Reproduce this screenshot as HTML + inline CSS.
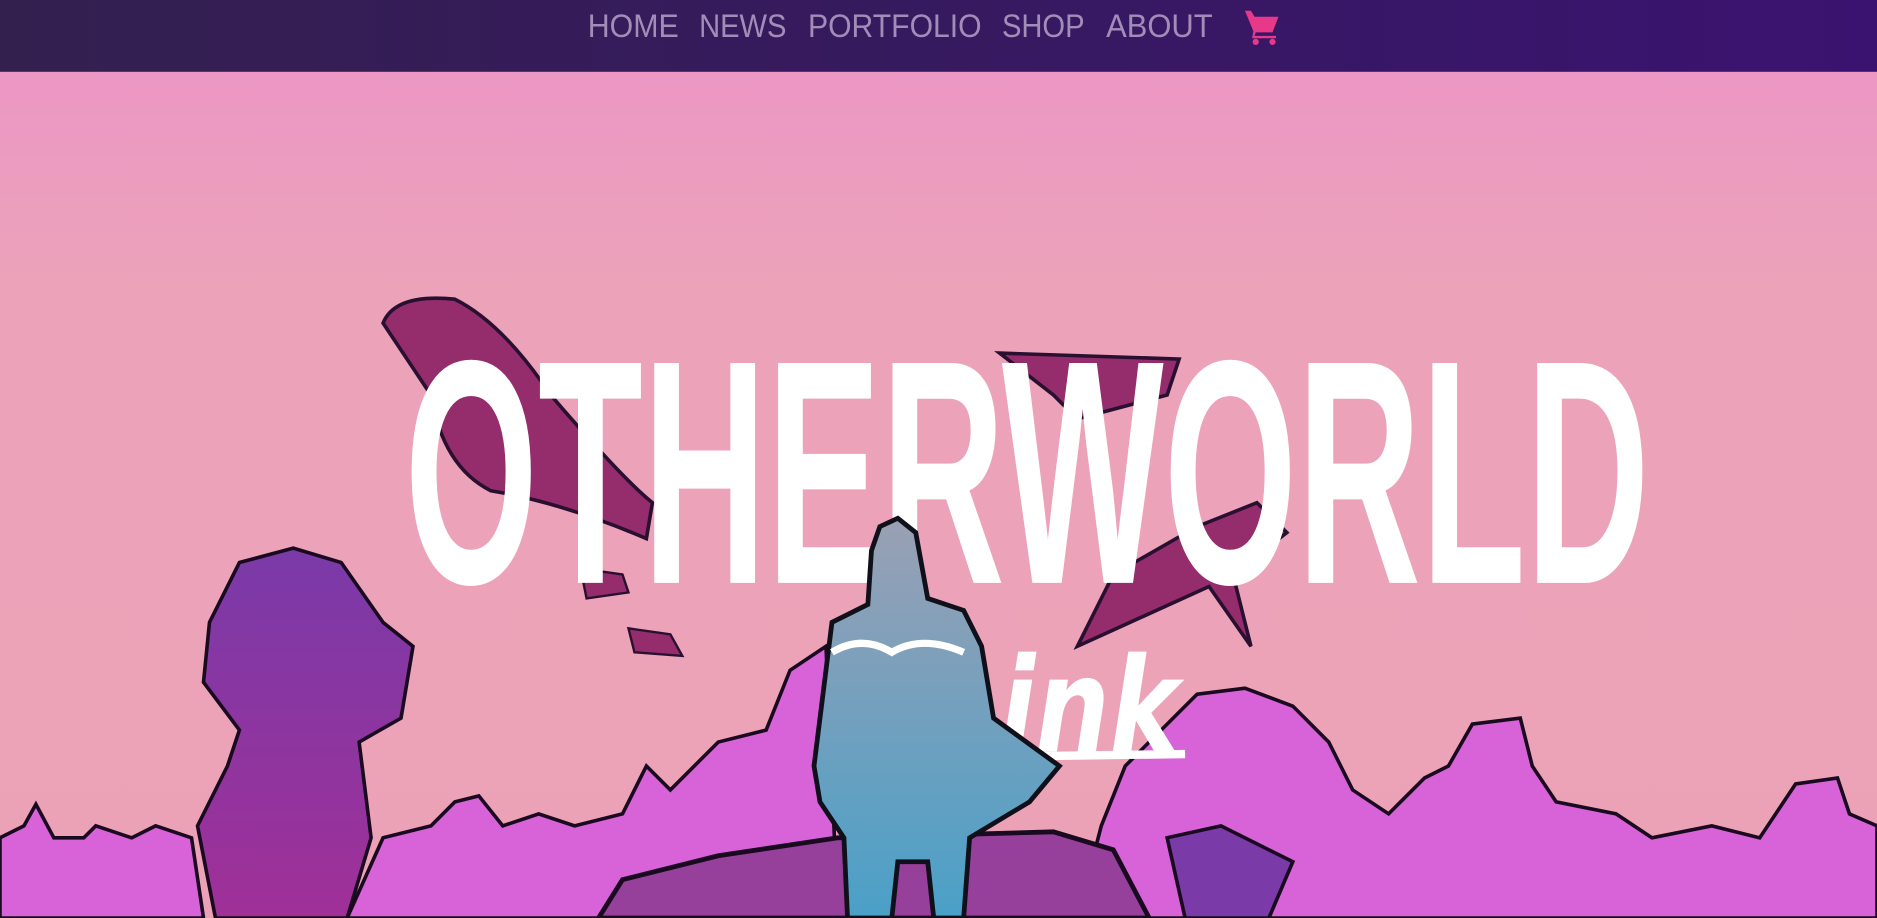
<!DOCTYPE html>
<html><head><meta charset="utf-8"><style>
html,body{margin:0;padding:0;width:1877px;height:918px;overflow:hidden;background:#eca2b8}
svg{display:block}
</style></head><body>
<svg width="1877" height="918" viewBox="0 0 1568 767" preserveAspectRatio="none" xmlns="http://www.w3.org/2000/svg">
<defs>
<linearGradient id="hd" x1="0" x2="1" y1="0" y2="0"><stop offset="0" stop-color="#33204f"/><stop offset="1" stop-color="#3a1370"/></linearGradient>
<linearGradient id="sky" x1="0" x2="0" y1="0" y2="1"><stop offset="0" stop-color="#ec97c4"/><stop offset="0.25" stop-color="#eca2b9"/><stop offset="1" stop-color="#eca2b6"/></linearGradient>
<linearGradient id="cape" x1="0" x2="0" y1="0" y2="1"><stop offset="0" stop-color="#9aa0b4"/><stop offset="1" stop-color="#4aa0c8"/></linearGradient>
<linearGradient id="tower" x1="0" x2="0" y1="0" y2="1"><stop offset="0" stop-color="#7a3aa8"/><stop offset="1" stop-color="#a03098"/></linearGradient>
</defs>
<rect x="0" y="60" width="1568" height="707" fill="url(#sky)"/>
<path d="M320 270 Q330 245 380 250 Q420 270 460 330 Q520 400 545 420 L540 450 Q470 420 410 410 Q370 390 360 330 Z" fill="#952c6c" stroke="#2a1030" stroke-width="3"/>
<path d="M835 295 L985 300 L975 330 L900 350 L880 330 Z" fill="#952c6c" stroke="#2a1030" stroke-width="3"/>
<path d="M930 480 L1000 440 L1050 420 L1075 445 L1030 480 L1045 540 L1010 490 L900 540 Z" fill="#952c6c" stroke="#2a1030" stroke-width="3"/>
<path d="M485 475 L520 480 L525 495 L490 500 Z" fill="#952c6c" stroke="#2a1030" stroke-width="2"/>
<path d="M525 525 L560 530 L570 548 L530 545 Z" fill="#952c6c" stroke="#2a1030" stroke-width="2"/>
<path d="M0 767 L0 700 L20 690 L30 672 L45 700 L70 700 L80 690 L110 700 L130 690 L160 700 L170 767 Z M290 767 L320 700 L360 690 L380 670 L400 665 L420 690 L450 680 L480 690 L520 680 L540 640 L560 660 L580 640 L600 620 L640 610 L660 560 L690 540 L700 767 Z M900 767 L920 690 L940 640 L980 600 L1000 580 L1040 575 L1080 590 L1110 620 L1130 660 L1160 680 L1190 650 L1210 640 L1230 605 L1270 600 L1280 640 L1300 670 L1350 680 L1380 700 L1430 690 L1470 700 L1500 655 L1535 650 L1545 680 L1568 690 L1568 767 Z" fill="#d862d8" stroke="#1a0a20" stroke-width="3"/>
<path d="M200 470 L245 458 L285 470 L320 520 L345 540 L335 600 L300 620 L310 700 L290 767 L180 767 L165 690 L190 640 L200 610 L170 570 L175 520 Z" fill="url(#tower)" stroke="#1a0a20" stroke-width="3"/>
<path d="M500 767 L520 735 L600 715 L700 700 L880 695 L930 710 L960 767 Z" fill="#96409c" stroke="#1a0a20" stroke-width="4"/>
<path d="M975 700 L1020 690 L1080 720 L1060 767 L990 767 Z" fill="#7a3aa8" stroke="#1a0a20" stroke-width="3"/>
<text x="338" y="487" font-family="Liberation Sans, sans-serif" font-weight="bold" font-size="267" fill="#fff" textLength="1040" lengthAdjust="spacingAndGlyphs">OTHERWORLD</text>
<text x="835" y="628" font-family="DejaVu Sans, sans-serif" font-style="italic" font-weight="bold" font-size="110" fill="#fff" textLength="150" lengthAdjust="spacingAndGlyphs">ink</text>
<path d="M850 632 L990 630" stroke="#fff" stroke-width="7"/>
<path d="M735 440 L750 433 L765 445 L775 500 L805 510 L820 540 L830 600 L885 640 L860 670 L810 700 L805 767 L780 767 L775 720 L750 720 L745 767 L708 767 L705 700 L685 670 L680 640 L690 560 L695 520 L725 505 L728 460 Z" fill="url(#cape)" stroke="#10101a" stroke-width="4"/>
<path d="M695 545 Q720 530 745 545 Q770 530 805 545" stroke="#fff" stroke-width="6" fill="none"/>
<rect x="0" y="0" width="1568" height="60" fill="url(#hd)"/>
<g font-family="Liberation Sans, sans-serif" font-size="27" fill="#a38db8">
<text x="491" y="31" textLength="76" lengthAdjust="spacingAndGlyphs">HOME</text>
<text x="584" y="31" textLength="73" lengthAdjust="spacingAndGlyphs">NEWS</text>
<text x="675" y="31" textLength="145" lengthAdjust="spacingAndGlyphs">PORTFOLIO</text>
<text x="837" y="31" textLength="69" lengthAdjust="spacingAndGlyphs">SHOP</text>
<text x="924" y="31" textLength="89" lengthAdjust="spacingAndGlyphs">ABOUT</text>
</g>
<g fill="#e8388a">
<path d="M1040 9 L1045 9 L1048 14 L1068 14 L1063 27 L1049 27 L1048 30 L1066 30 L1066 32 L1046 32 L1047 26 Z"/>
<circle cx="1049" cy="35" r="2.6"/><circle cx="1063" cy="35" r="2.6"/>
</g>
</svg>
</body></html>
